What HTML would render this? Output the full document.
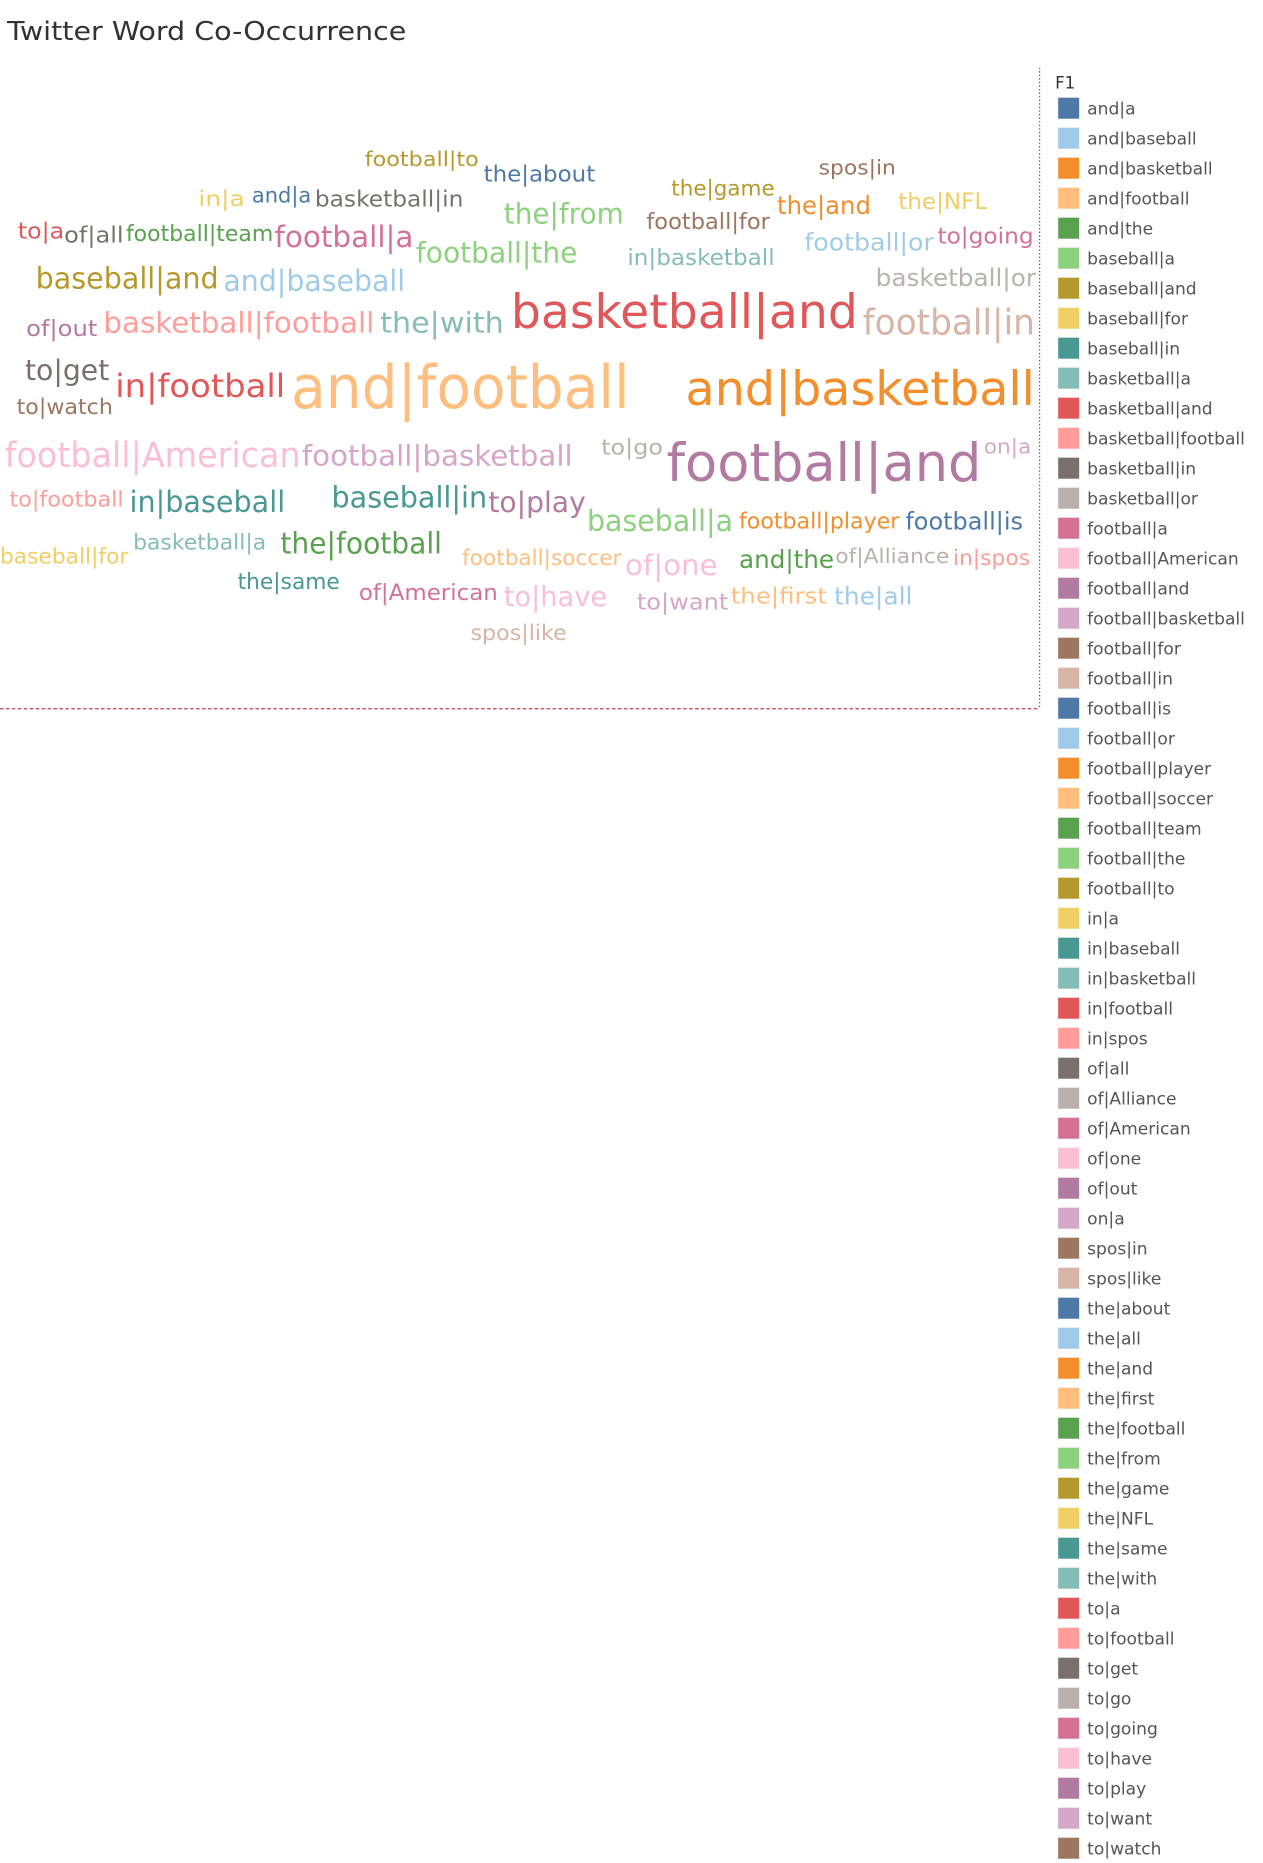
<!DOCTYPE html>
<html><head><meta charset="utf-8"><style>
html,body{margin:0;padding:0;background:#fff;}
svg{display:block;}
text{font-family:"DejaVu Sans","Liberation Sans",sans-serif;}
</style></head><body>
<svg width="1263" height="1863" viewBox="0 0 1063 1568" xmlns="http://www.w3.org/2000/svg">
<text x="6" y="27" font-size="22" fill="#333" dominant-baseline="central" textLength="336" lengthAdjust="spacingAndGlyphs">Twitter Word Co-Occurrence</text>
<line x1="875" y1="57" x2="875" y2="597" stroke="#444" stroke-width="1" stroke-dasharray="1,2"/>
<line x1="0" y1="596.5" x2="875" y2="596.5" stroke="#c04050" stroke-width="1" stroke-dasharray="3,2"/>
<g dominant-baseline="central">
<text x="307" y="134" font-size="17" fill="#b6992d" textLength="96" lengthAdjust="spacingAndGlyphs">football|to</text>
<text x="407" y="147" font-size="19" fill="#4e79a7" textLength="94" lengthAdjust="spacingAndGlyphs">the|about</text>
<text x="689" y="141" font-size="17" fill="#9c755f" textLength="65" lengthAdjust="spacingAndGlyphs">spos|in</text>
<text x="565" y="159" font-size="18" fill="#b6992d" textLength="87" lengthAdjust="spacingAndGlyphs">the|game</text>
<text x="167" y="168" font-size="18" fill="#f1ce63" textLength="39" lengthAdjust="spacingAndGlyphs">in|a</text>
<text x="212" y="165" font-size="18" fill="#4e79a7" textLength="50" lengthAdjust="spacingAndGlyphs">and|a</text>
<text x="265" y="168" font-size="19" fill="#79706e" textLength="125" lengthAdjust="spacingAndGlyphs">basketball|in</text>
<text x="654" y="173" font-size="21" fill="#f28e2b" textLength="79" lengthAdjust="spacingAndGlyphs">the|and</text>
<text x="756" y="170" font-size="19" fill="#f1ce63" textLength="75" lengthAdjust="spacingAndGlyphs">the|NFL</text>
<text x="424" y="180" font-size="24" fill="#8cd17d" textLength="101" lengthAdjust="spacingAndGlyphs">the|from</text>
<text x="544" y="187" font-size="19" fill="#9d7660" textLength="104" lengthAdjust="spacingAndGlyphs">football|for</text>
<text x="15" y="195" font-size="19" fill="#e15759" textLength="39" lengthAdjust="spacingAndGlyphs">to|a</text>
<text x="54" y="198" font-size="19" fill="#79706e" textLength="50" lengthAdjust="spacingAndGlyphs">of|all</text>
<text x="106" y="197" font-size="19" fill="#59a14f" textLength="124" lengthAdjust="spacingAndGlyphs">football|team</text>
<text x="231" y="200" font-size="25" fill="#d37295" textLength="117" lengthAdjust="spacingAndGlyphs">football|a</text>
<text x="677" y="204" font-size="20" fill="#a0cbe8" textLength="109" lengthAdjust="spacingAndGlyphs">football|or</text>
<text x="789" y="199" font-size="19" fill="#d37295" textLength="81" lengthAdjust="spacingAndGlyphs">to|going</text>
<text x="350" y="213" font-size="24" fill="#8cd17d" textLength="136" lengthAdjust="spacingAndGlyphs">football|the</text>
<text x="528" y="217" font-size="19" fill="#86bcb6" textLength="124" lengthAdjust="spacingAndGlyphs">in|basketball</text>
<text x="737" y="234" font-size="20" fill="#bab0ac" textLength="135" lengthAdjust="spacingAndGlyphs">basketball|or</text>
<text x="30" y="235" font-size="25" fill="#b6992d" textLength="154" lengthAdjust="spacingAndGlyphs">baseball|and</text>
<text x="188" y="237" font-size="25" fill="#a0cbe8" textLength="153" lengthAdjust="spacingAndGlyphs">and|baseball</text>
<text x="430" y="263" font-size="40" fill="#e15759" textLength="292" lengthAdjust="spacingAndGlyphs">basketball|and</text>
<text x="726" y="272" font-size="30" fill="#d7b5a6" textLength="145" lengthAdjust="spacingAndGlyphs">football|in</text>
<text x="22" y="277" font-size="19" fill="#b07aa1" textLength="60" lengthAdjust="spacingAndGlyphs">of|out</text>
<text x="87" y="272" font-size="24" fill="#ff9d9a" textLength="228" lengthAdjust="spacingAndGlyphs">basketball|football</text>
<text x="320" y="272" font-size="24" fill="#86bcb6" textLength="104" lengthAdjust="spacingAndGlyphs">the|with</text>
<text x="21" y="312" font-size="24" fill="#79706e" textLength="71" lengthAdjust="spacingAndGlyphs">to|get</text>
<text x="97" y="325" font-size="27" fill="#e15759" textLength="143" lengthAdjust="spacingAndGlyphs">in|football</text>
<text x="245" y="327" font-size="50" fill="#ffbe7d" textLength="285" lengthAdjust="spacingAndGlyphs">and|football</text>
<text x="577" y="328" font-size="40" fill="#f28e2b" textLength="294" lengthAdjust="spacingAndGlyphs">and|basketball</text>
<text x="14" y="343" font-size="18" fill="#9c755f" textLength="81" lengthAdjust="spacingAndGlyphs">to|watch</text>
<text x="4" y="384" font-size="29" fill="#fabfd2" textLength="249" lengthAdjust="spacingAndGlyphs">football|American</text>
<text x="254" y="384" font-size="24" fill="#d4a6c8" textLength="228" lengthAdjust="spacingAndGlyphs">football|basketball</text>
<text x="506" y="377" font-size="18" fill="#bab0ac" textLength="52" lengthAdjust="spacingAndGlyphs">to|go</text>
<text x="561" y="390" font-size="44" fill="#b07aa1" textLength="265" lengthAdjust="spacingAndGlyphs">football|and</text>
<text x="828" y="376" font-size="17" fill="#d4a6c8" textLength="40" lengthAdjust="spacingAndGlyphs">on|a</text>
<text x="8" y="421" font-size="18" fill="#ff9d9a" textLength="96" lengthAdjust="spacingAndGlyphs">to|football</text>
<text x="109" y="423" font-size="25" fill="#499894" textLength="131" lengthAdjust="spacingAndGlyphs">in|baseball</text>
<text x="279" y="419" font-size="25" fill="#499894" textLength="131" lengthAdjust="spacingAndGlyphs">baseball|in</text>
<text x="411" y="423" font-size="24" fill="#b07aa1" textLength="82" lengthAdjust="spacingAndGlyphs">to|play</text>
<text x="494" y="439" font-size="25" fill="#8cd17d" textLength="123" lengthAdjust="spacingAndGlyphs">baseball|a</text>
<text x="622" y="439" font-size="19" fill="#f28e2b" textLength="135" lengthAdjust="spacingAndGlyphs">football|player</text>
<text x="762" y="439" font-size="20" fill="#4e79a7" textLength="99" lengthAdjust="spacingAndGlyphs">football|is</text>
<text x="112" y="457" font-size="18" fill="#86bcb6" textLength="112" lengthAdjust="spacingAndGlyphs">basketball|a</text>
<text x="236" y="458" font-size="25" fill="#59a14f" textLength="136" lengthAdjust="spacingAndGlyphs">the|football</text>
<text x="0" y="469" font-size="18" fill="#f1ce63" textLength="108" lengthAdjust="spacingAndGlyphs">baseball|for</text>
<text x="389" y="470" font-size="18" fill="#ffbe7d" textLength="134" lengthAdjust="spacingAndGlyphs">football|soccer</text>
<text x="526" y="476" font-size="24" fill="#fabfd2" textLength="78" lengthAdjust="spacingAndGlyphs">of|one</text>
<text x="622" y="471" font-size="21" fill="#59a14f" textLength="80" lengthAdjust="spacingAndGlyphs">and|the</text>
<text x="703" y="468" font-size="17" fill="#bab0ac" textLength="96" lengthAdjust="spacingAndGlyphs">of|Alliance</text>
<text x="802" y="470" font-size="18" fill="#ff9d9a" textLength="65" lengthAdjust="spacingAndGlyphs">in|spos</text>
<text x="200" y="490" font-size="19" fill="#499894" textLength="86" lengthAdjust="spacingAndGlyphs">the|same</text>
<text x="302" y="499" font-size="19" fill="#d37295" textLength="117" lengthAdjust="spacingAndGlyphs">of|American</text>
<text x="424" y="503" font-size="23" fill="#fabfd2" textLength="87" lengthAdjust="spacingAndGlyphs">to|have</text>
<text x="536" y="507" font-size="19" fill="#d4a6c8" textLength="77" lengthAdjust="spacingAndGlyphs">to|want</text>
<text x="615" y="502" font-size="19" fill="#ffbe7d" textLength="81" lengthAdjust="spacingAndGlyphs">the|first</text>
<text x="702" y="502" font-size="20" fill="#a0cbe8" textLength="66" lengthAdjust="spacingAndGlyphs">the|all</text>
<text x="396" y="533" font-size="18" fill="#d7b5a6" textLength="81" lengthAdjust="spacingAndGlyphs">spos|like</text>
</g>
<text x="888" y="70" font-size="14" fill="#333" dominant-baseline="central">F1</text>
<g font-size="14.4" fill="#555" dominant-baseline="central">
<rect x="890.6" y="82.2" width="17.7" height="17.7" fill="#4e79a7"/><text x="915" y="92">and|a</text>
<rect x="890.6" y="107.45" width="17.7" height="17.7" fill="#a0cbe8"/><text x="915" y="117.25">and|baseball</text>
<rect x="890.6" y="132.7" width="17.7" height="17.7" fill="#f28e2b"/><text x="915" y="142.5">and|basketball</text>
<rect x="890.6" y="157.95" width="17.7" height="17.7" fill="#ffbe7d"/><text x="915" y="167.75">and|football</text>
<rect x="890.6" y="183.2" width="17.7" height="17.7" fill="#59a14f"/><text x="915" y="193">and|the</text>
<rect x="890.6" y="208.45" width="17.7" height="17.7" fill="#8cd17d"/><text x="915" y="218.25">baseball|a</text>
<rect x="890.6" y="233.7" width="17.7" height="17.7" fill="#b6992d"/><text x="915" y="243.5">baseball|and</text>
<rect x="890.6" y="258.95" width="17.7" height="17.7" fill="#f1ce63"/><text x="915" y="268.75">baseball|for</text>
<rect x="890.6" y="284.2" width="17.7" height="17.7" fill="#499894"/><text x="915" y="294">baseball|in</text>
<rect x="890.6" y="309.45" width="17.7" height="17.7" fill="#86bcb6"/><text x="915" y="319.25">basketball|a</text>
<rect x="890.6" y="334.7" width="17.7" height="17.7" fill="#e15759"/><text x="915" y="344.5">basketball|and</text>
<rect x="890.6" y="359.95" width="17.7" height="17.7" fill="#ff9d9a"/><text x="915" y="369.75">basketball|football</text>
<rect x="890.6" y="385.2" width="17.7" height="17.7" fill="#79706e"/><text x="915" y="395">basketball|in</text>
<rect x="890.6" y="410.45" width="17.7" height="17.7" fill="#bab0ac"/><text x="915" y="420.25">basketball|or</text>
<rect x="890.6" y="435.7" width="17.7" height="17.7" fill="#d37295"/><text x="915" y="445.5">football|a</text>
<rect x="890.6" y="460.95" width="17.7" height="17.7" fill="#fabfd2"/><text x="915" y="470.75">football|American</text>
<rect x="890.6" y="486.2" width="17.7" height="17.7" fill="#b07aa1"/><text x="915" y="496">football|and</text>
<rect x="890.6" y="511.45" width="17.7" height="17.7" fill="#d4a6c8"/><text x="915" y="521.25">football|basketball</text>
<rect x="890.6" y="536.7" width="17.7" height="17.7" fill="#9d7660"/><text x="915" y="546.5">football|for</text>
<rect x="890.6" y="561.95" width="17.7" height="17.7" fill="#d7b5a6"/><text x="915" y="571.75">football|in</text>
<rect x="890.6" y="587.2" width="17.7" height="17.7" fill="#4e79a7"/><text x="915" y="597">football|is</text>
<rect x="890.6" y="612.45" width="17.7" height="17.7" fill="#a0cbe8"/><text x="915" y="622.25">football|or</text>
<rect x="890.6" y="637.7" width="17.7" height="17.7" fill="#f28e2b"/><text x="915" y="647.5">football|player</text>
<rect x="890.6" y="662.95" width="17.7" height="17.7" fill="#ffbe7d"/><text x="915" y="672.75">football|soccer</text>
<rect x="890.6" y="688.2" width="17.7" height="17.7" fill="#59a14f"/><text x="915" y="698">football|team</text>
<rect x="890.6" y="713.45" width="17.7" height="17.7" fill="#8cd17d"/><text x="915" y="723.25">football|the</text>
<rect x="890.6" y="738.7" width="17.7" height="17.7" fill="#b6992d"/><text x="915" y="748.5">football|to</text>
<rect x="890.6" y="763.95" width="17.7" height="17.7" fill="#f1ce63"/><text x="915" y="773.75">in|a</text>
<rect x="890.6" y="789.2" width="17.7" height="17.7" fill="#499894"/><text x="915" y="799">in|baseball</text>
<rect x="890.6" y="814.45" width="17.7" height="17.7" fill="#86bcb6"/><text x="915" y="824.25">in|basketball</text>
<rect x="890.6" y="839.7" width="17.7" height="17.7" fill="#e15759"/><text x="915" y="849.5">in|football</text>
<rect x="890.6" y="864.95" width="17.7" height="17.7" fill="#ff9d9a"/><text x="915" y="874.75">in|spos</text>
<rect x="890.6" y="890.2" width="17.7" height="17.7" fill="#79706e"/><text x="915" y="900">of|all</text>
<rect x="890.6" y="915.45" width="17.7" height="17.7" fill="#bab0ac"/><text x="915" y="925.25">of|Alliance</text>
<rect x="890.6" y="940.7" width="17.7" height="17.7" fill="#d37295"/><text x="915" y="950.5">of|American</text>
<rect x="890.6" y="965.95" width="17.7" height="17.7" fill="#fabfd2"/><text x="915" y="975.75">of|one</text>
<rect x="890.6" y="991.2" width="17.7" height="17.7" fill="#b07aa1"/><text x="915" y="1001">of|out</text>
<rect x="890.6" y="1016.45" width="17.7" height="17.7" fill="#d4a6c8"/><text x="915" y="1026.25">on|a</text>
<rect x="890.6" y="1041.7" width="17.7" height="17.7" fill="#9d7660"/><text x="915" y="1051.5">spos|in</text>
<rect x="890.6" y="1066.95" width="17.7" height="17.7" fill="#d7b5a6"/><text x="915" y="1076.75">spos|like</text>
<rect x="890.6" y="1092.2" width="17.7" height="17.7" fill="#4e79a7"/><text x="915" y="1102">the|about</text>
<rect x="890.6" y="1117.45" width="17.7" height="17.7" fill="#a0cbe8"/><text x="915" y="1127.25">the|all</text>
<rect x="890.6" y="1142.7" width="17.7" height="17.7" fill="#f28e2b"/><text x="915" y="1152.5">the|and</text>
<rect x="890.6" y="1167.95" width="17.7" height="17.7" fill="#ffbe7d"/><text x="915" y="1177.75">the|first</text>
<rect x="890.6" y="1193.2" width="17.7" height="17.7" fill="#59a14f"/><text x="915" y="1203">the|football</text>
<rect x="890.6" y="1218.45" width="17.7" height="17.7" fill="#8cd17d"/><text x="915" y="1228.25">the|from</text>
<rect x="890.6" y="1243.7" width="17.7" height="17.7" fill="#b6992d"/><text x="915" y="1253.5">the|game</text>
<rect x="890.6" y="1268.95" width="17.7" height="17.7" fill="#f1ce63"/><text x="915" y="1278.75">the|NFL</text>
<rect x="890.6" y="1294.2" width="17.7" height="17.7" fill="#499894"/><text x="915" y="1304">the|same</text>
<rect x="890.6" y="1319.45" width="17.7" height="17.7" fill="#86bcb6"/><text x="915" y="1329.25">the|with</text>
<rect x="890.6" y="1344.7" width="17.7" height="17.7" fill="#e15759"/><text x="915" y="1354.5">to|a</text>
<rect x="890.6" y="1369.95" width="17.7" height="17.7" fill="#ff9d9a"/><text x="915" y="1379.75">to|football</text>
<rect x="890.6" y="1395.2" width="17.7" height="17.7" fill="#79706e"/><text x="915" y="1405">to|get</text>
<rect x="890.6" y="1420.45" width="17.7" height="17.7" fill="#bab0ac"/><text x="915" y="1430.25">to|go</text>
<rect x="890.6" y="1445.7" width="17.7" height="17.7" fill="#d37295"/><text x="915" y="1455.5">to|going</text>
<rect x="890.6" y="1470.95" width="17.7" height="17.7" fill="#fabfd2"/><text x="915" y="1480.75">to|have</text>
<rect x="890.6" y="1496.2" width="17.7" height="17.7" fill="#b07aa1"/><text x="915" y="1506">to|play</text>
<rect x="890.6" y="1521.45" width="17.7" height="17.7" fill="#d4a6c8"/><text x="915" y="1531.25">to|want</text>
<rect x="890.6" y="1546.7" width="17.7" height="17.7" fill="#9d7660"/><text x="915" y="1556.5">to|watch</text>
</g>
</svg>
</body></html>
